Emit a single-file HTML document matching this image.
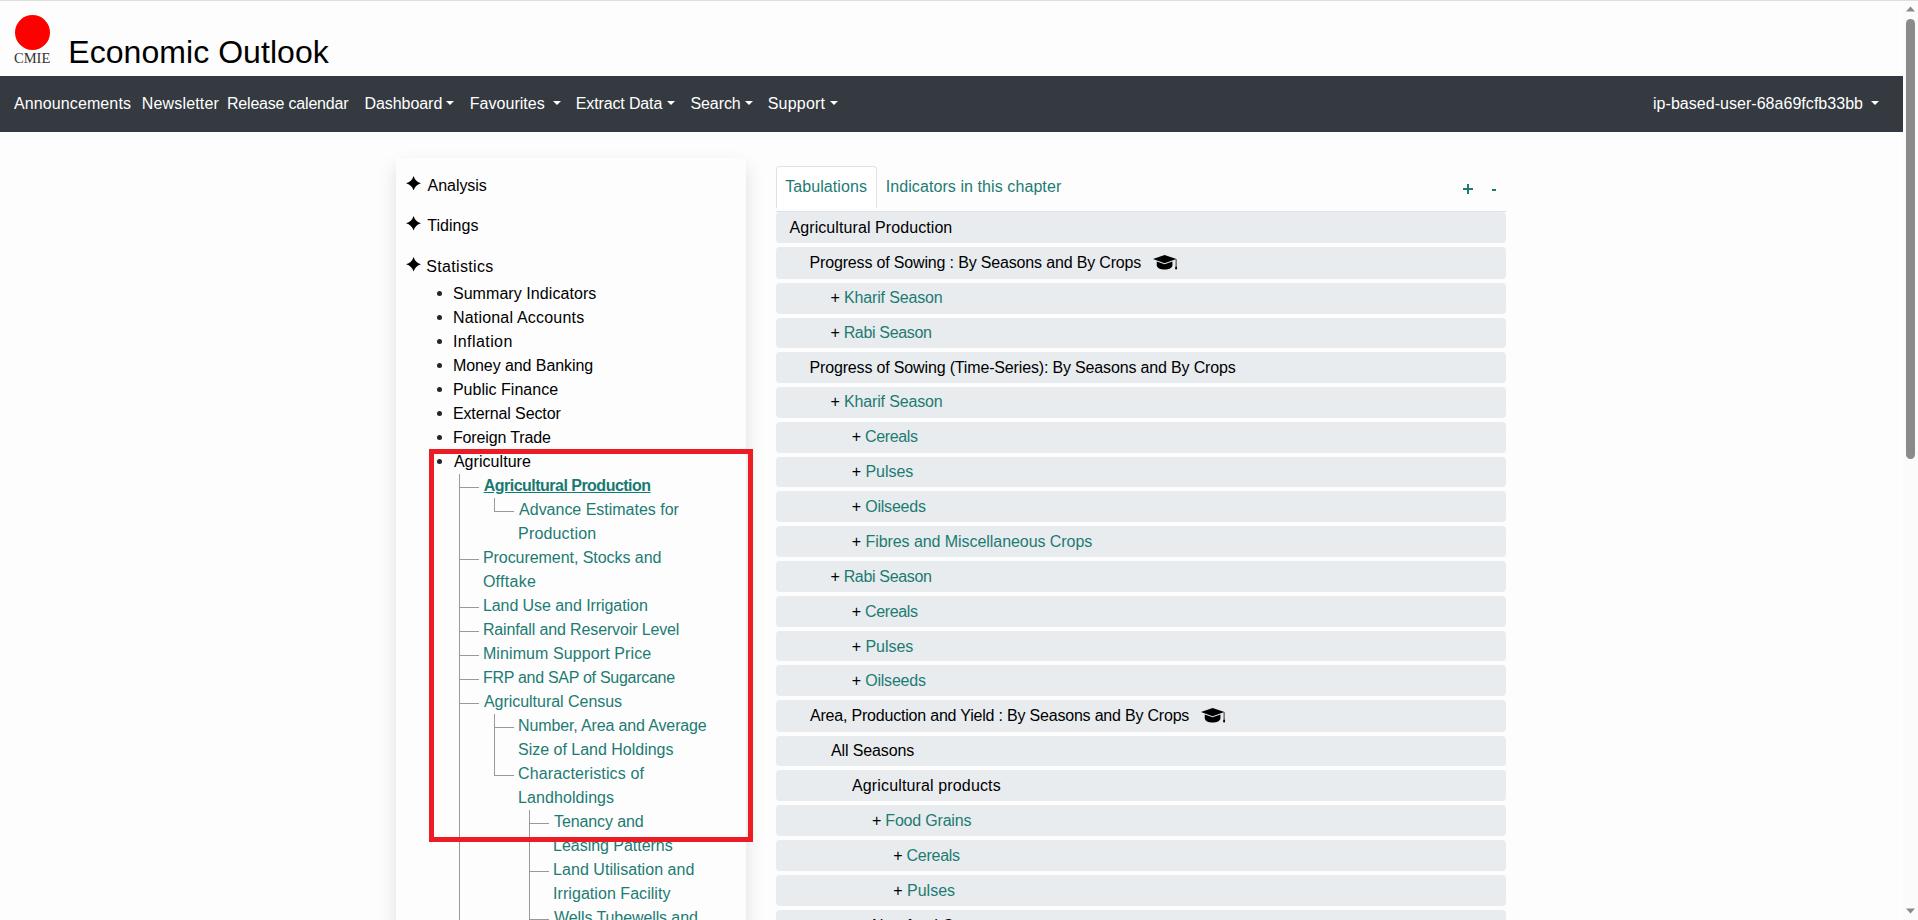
<!DOCTYPE html>
<html><head><meta charset="utf-8">
<style>
html,body{margin:0;padding:0;}
body{width:1918px;height:920px;overflow:hidden;background:#fdfdfd;position:relative;font-family:"Liberation Sans",sans-serif;font-size:16px;line-height:24px;color:#000;}
.a{position:absolute;white-space:nowrap;}
#topline{left:0;top:0;width:1918px;height:1px;background:#dfe0de;}
#logo{left:15px;top:15px;width:35px;height:35px;border-radius:50%;background:#ff0000;box-shadow:0 0 0 1px #fff;}
#cmie{left:14px;top:50px;font-family:"Liberation Serif",serif;font-size:14.5px;line-height:16px;color:#333;}
#title{font-size:32px;line-height:40px;color:#000;}
#nav{left:0;top:76px;width:1903px;height:56px;background:#343a40;}
.ni{color:#fff;}
.car{width:0;height:0;border-top:4.8px solid #fff;border-left:4.5px solid transparent;border-right:4.5px solid transparent;}
#panel{left:396px;top:158px;width:350px;height:800px;background:#fdfdfd;box-shadow:0 8px 18px rgba(0,0,0,.12);}
.bul{width:5px;height:5px;border-radius:50%;background:#212529;}
.tl{color:#1c7b72;}
.vl{width:1px;background:#999;}
.hl{height:1px;background:#999;}
#redbox{left:429px;top:449px;width:314px;height:383px;border:5px solid #ed1c24;}
#tab{left:776px;top:166px;width:99px;height:41px;border:1px solid #dee2e6;border-bottom:none;border-radius:4px 4px 0 0;background:#fff;}
#navline{left:776px;top:211px;width:730px;height:1px;background:#dee2e6;}
.row{left:776px;width:730px;background:#e9ecef;border-radius:4px;}
.lk{color:#1c7b72;}
.sb{background:#8a8a8a;}
</style></head><body>
<div class="a" id="topline"></div>
<div class="a" id="logo"></div>
<div class="a" id="cmie">CMIE</div>
<div id="title" class="a " style="left:68.30px;top:31.80px;letter-spacing:0.053px;">Economic Outlook</div>
<div class="a" id="nav"></div>
<div class="a ni" style="left:14.00px;top:92.00px;letter-spacing:0.108px;">Announcements</div>
<div class="a ni" style="left:141.80px;top:92.00px;letter-spacing:0.156px;">Newsletter</div>
<div class="a ni" style="left:227.00px;top:92.00px;letter-spacing:-0.200px;">Release calendar</div>
<div class="a ni" style="left:364.50px;top:92.00px;letter-spacing:-0.062px;">Dashboard</div>
<div class="a ni" style="left:469.80px;top:92.00px;letter-spacing:0.022px;">Favourites</div>
<div class="a ni" style="left:575.80px;top:92.00px;letter-spacing:-0.136px;">Extract Data</div>
<div class="a ni" style="left:690.50px;top:92.00px;letter-spacing:-0.100px;">Search</div>
<div class="a ni" style="left:767.70px;top:92.00px;letter-spacing:0.217px;">Support</div>
<div class="a ni" style="left:1653.00px;top:92.00px;letter-spacing:0.038px;">ip-based-user-68a69fcfb33bb</div>
<div class="a car" style="left:446.0px;top:100.5px"></div>
<div class="a car" style="left:553.0px;top:100.5px"></div>
<div class="a car" style="left:667.0px;top:100.5px"></div>
<div class="a car" style="left:744.5px;top:100.5px"></div>
<div class="a car" style="left:829.5px;top:100.5px"></div>
<div class="a car" style="left:1870.5px;top:100.5px"></div>
<div class="a" id="panel"></div>
<svg class="a" style="left:406.1px;top:175.9px" width="15.2" height="14.6" viewBox="0 0 15.2 14.6"><path d="M7.6 0Q9.3 5.6 15.2 7.3Q9.3 9.0 7.6 14.6Q5.9 9.0 0 7.3Q5.9 5.6 7.6 0Z" fill="#000"/></svg>
<div class="a " style="left:427.60px;top:174.20px;letter-spacing:-0.057px;">Analysis</div>
<svg class="a" style="left:406.1px;top:216.1px" width="15.2" height="14.6" viewBox="0 0 15.2 14.6"><path d="M7.6 0Q9.3 5.6 15.2 7.3Q9.3 9.0 7.6 14.6Q5.9 9.0 0 7.3Q5.9 5.6 7.6 0Z" fill="#000"/></svg>
<div class="a " style="left:427.30px;top:213.70px;letter-spacing:0.017px;">Tidings</div>
<svg class="a" style="left:406.1px;top:257.1px" width="15.2" height="14.6" viewBox="0 0 15.2 14.6"><path d="M7.6 0Q9.3 5.6 15.2 7.3Q9.3 9.0 7.6 14.6Q5.9 9.0 0 7.3Q5.9 5.6 7.6 0Z" fill="#000"/></svg>
<div class="a " style="left:426.30px;top:254.60px;letter-spacing:0.333px;">Statistics</div>
<div class="a bul" style="left:437px;top:291px"></div>
<div class="a " style="left:452.90px;top:282.00px;letter-spacing:0.071px;">Summary Indicators</div>
<div class="a bul" style="left:437px;top:315px"></div>
<div class="a " style="left:452.90px;top:306.00px;letter-spacing:0.200px;">National Accounts</div>
<div class="a bul" style="left:437px;top:339px"></div>
<div class="a " style="left:452.90px;top:330.00px;letter-spacing:0.425px;">Inflation</div>
<div class="a bul" style="left:437px;top:363px"></div>
<div class="a " style="left:452.90px;top:354.00px;letter-spacing:-0.069px;">Money and Banking</div>
<div class="a bul" style="left:437px;top:387px"></div>
<div class="a " style="left:452.90px;top:378.00px;letter-spacing:0.023px;">Public Finance</div>
<div class="a bul" style="left:437px;top:411px"></div>
<div class="a " style="left:452.90px;top:402.00px;letter-spacing:-0.107px;">External Sector</div>
<div class="a bul" style="left:437px;top:435px"></div>
<div class="a " style="left:452.90px;top:426.00px;letter-spacing:-0.125px;">Foreign Trade</div>
<div class="a bul" style="left:437px;top:459px"></div>
<div class="a " style="left:453.90px;top:450.00px;letter-spacing:0.050px;">Agriculture</div>
<div class="a tl" style="left:483.70px;top:474.00px;letter-spacing:-0.514px;font-weight:bold;text-decoration:underline;color:#177a72">Agricultural Production</div>
<div class="a hl" style="left:459px;top:487px;width:20px"></div>
<div class="a tl" style="left:519.10px;top:498.00px;letter-spacing:-0.015px;">Advance Estimates for</div>
<div class="a hl" style="left:494px;top:511px;width:20px"></div>
<div class="a tl" style="left:518.10px;top:522.00px;letter-spacing:0.167px;">Production</div>
<div class="a tl" style="left:482.90px;top:546.00px;letter-spacing:-0.050px;">Procurement, Stocks and</div>
<div class="a hl" style="left:459px;top:559px;width:20px"></div>
<div class="a tl" style="left:482.90px;top:570.00px;letter-spacing:0.283px;">Offtake</div>
<div class="a tl" style="left:482.90px;top:594.00px;letter-spacing:-0.064px;">Land Use and Irrigation</div>
<div class="a hl" style="left:459px;top:607px;width:20px"></div>
<div class="a tl" style="left:482.90px;top:618.00px;letter-spacing:-0.133px;">Rainfall and Reservoir Level</div>
<div class="a hl" style="left:459px;top:631px;width:20px"></div>
<div class="a tl" style="left:482.90px;top:642.00px;letter-spacing:0.100px;">Minimum Support Price</div>
<div class="a hl" style="left:459px;top:655px;width:20px"></div>
<div class="a tl" style="left:482.90px;top:666.00px;letter-spacing:-0.283px;">FRP and SAP of Sugarcane</div>
<div class="a hl" style="left:459px;top:679px;width:20px"></div>
<div class="a tl" style="left:483.90px;top:690.00px;letter-spacing:-0.028px;">Agricultural Census</div>
<div class="a hl" style="left:459px;top:703px;width:20px"></div>
<div class="a tl" style="left:518.10px;top:714.00px;letter-spacing:-0.139px;">Number, Area and Average</div>
<div class="a hl" style="left:494px;top:727px;width:20px"></div>
<div class="a tl" style="left:518.10px;top:738.00px;letter-spacing:-0.015px;">Size of Land Holdings</div>
<div class="a tl" style="left:518.10px;top:762.00px;letter-spacing:0.129px;">Characteristics of</div>
<div class="a hl" style="left:494px;top:775px;width:20px"></div>
<div class="a tl" style="left:518.10px;top:786.00px;letter-spacing:0.073px;">Landholdings</div>
<div class="a tl" style="left:554.10px;top:810.00px;letter-spacing:-0.120px;">Tenancy and</div>
<div class="a hl" style="left:529px;top:823px;width:20px"></div>
<div class="a tl" style="left:553.10px;top:834.00px;letter-spacing:-0.033px;">Leasing Patterns</div>
<div class="a tl" style="left:553.10px;top:858.00px;letter-spacing:0.037px;">Land Utilisation and</div>
<div class="a hl" style="left:529px;top:871px;width:20px"></div>
<div class="a tl" style="left:553.10px;top:882.00px;letter-spacing:0.050px;">Irrigation Facility</div>
<div class="a tl" style="left:554.10px;top:906.00px;letter-spacing:-0.100px;">Wells Tubewells and</div>
<div class="a hl" style="left:529px;top:919px;width:20px"></div>
<div class="a vl" style="left:459px;top:474px;height:460px"></div>
<div class="a vl" style="left:494px;top:498px;height:14px"></div>
<div class="a vl" style="left:494px;top:714px;height:62px"></div>
<div class="a vl" style="left:529px;top:810px;height:120px"></div>
<div class="a" id="redbox"></div>
<div class="a" id="tab"></div>
<div class="a lk" style="left:785.20px;top:174.80px;letter-spacing:0.080px;">Tabulations</div>
<div class="a lk" style="left:885.70px;top:174.80px;letter-spacing:0.084px;">Indicators in this chapter</div>
<div class="a" style="left:1463px;top:188.2px;width:10px;height:1.5px;background:#1c7b72"></div>
<div class="a" style="left:1467.25px;top:184px;width:1.5px;height:10px;background:#1c7b72"></div>
<div class="a" style="left:1491.6px;top:189px;width:4.6px;height:1.5px;background:#1c7b72"></div>
<div class="a" id="navline"></div>
<div class="a row" style="top:212.00px;height:31px"></div>
<div class="a " style="left:789.50px;top:216.10px;letter-spacing:0.082px;">Agricultural Production</div>
<div class="a row" style="top:247.00px;height:32px"></div>
<div class="a " style="left:809.50px;top:250.97px;letter-spacing:-0.163px;">Progress of Sowing : By Seasons and By Crops</div>
<svg class="a" style="left:1152.7px;top:255.30px" width="25" height="16" viewBox="0 0 25 16"><path fill="#000" d="M0 4.1L11.6 0L23.4 4.1L11.6 8.2Z"/><path fill="#000" d="M3.8 6.4L11.6 9.2L19.4 6.4L19.5 9.8C19.5 13.4 15.6 14.5 11.6 14.5C7.6 14.5 3.7 13.4 3.7 9.8Z"/><rect x="22.6" y="4.1" width="1" height="8" fill="#333"/><ellipse cx="23.1" cy="12.9" rx="1.05" ry="1.5" fill="#000"/></svg>
<div class="a row" style="top:283.00px;height:31px"></div>
<div class="a " style="left:830.50px;top:285.84px;letter-spacing:-0.150px;">+ <span class="lk">Kharif Season</span></div>
<div class="a row" style="top:318.00px;height:30px"></div>
<div class="a " style="left:830.50px;top:320.71px;letter-spacing:-0.333px;">+ <span class="lk">Rabi Season</span></div>
<div class="a row" style="top:352.00px;height:31px"></div>
<div class="a " style="left:809.50px;top:355.58px;letter-spacing:-0.159px;">Progress of Sowing (Time-Series): By Seasons and By Crops</div>
<div class="a row" style="top:387.00px;height:31px"></div>
<div class="a " style="left:830.50px;top:390.45px;letter-spacing:-0.150px;">+ <span class="lk">Kharif Season</span></div>
<div class="a row" style="top:422.00px;height:31px"></div>
<div class="a " style="left:851.80px;top:425.32px;letter-spacing:-0.337px;">+ <span class="lk">Cereals</span></div>
<div class="a row" style="top:457.00px;height:30px"></div>
<div class="a " style="left:851.80px;top:460.19px;letter-spacing:-0.057px;">+ <span class="lk">Pulses</span></div>
<div class="a row" style="top:491.00px;height:31px"></div>
<div class="a " style="left:851.80px;top:495.06px;letter-spacing:-0.211px;">+ <span class="lk">Oilseeds</span></div>
<div class="a row" style="top:526.00px;height:31px"></div>
<div class="a " style="left:851.80px;top:529.93px;letter-spacing:-0.061px;">+ <span class="lk">Fibres and Miscellaneous Crops</span></div>
<div class="a row" style="top:561.00px;height:31px"></div>
<div class="a " style="left:830.50px;top:564.80px;letter-spacing:-0.333px;">+ <span class="lk">Rabi Season</span></div>
<div class="a row" style="top:596.00px;height:31px"></div>
<div class="a " style="left:851.80px;top:599.67px;letter-spacing:-0.337px;">+ <span class="lk">Cereals</span></div>
<div class="a row" style="top:631.00px;height:30px"></div>
<div class="a " style="left:851.80px;top:634.54px;letter-spacing:-0.057px;">+ <span class="lk">Pulses</span></div>
<div class="a row" style="top:665.00px;height:31px"></div>
<div class="a " style="left:851.80px;top:669.41px;letter-spacing:-0.211px;">+ <span class="lk">Oilseeds</span></div>
<div class="a row" style="top:700.00px;height:32px"></div>
<div class="a " style="left:810.00px;top:704.28px;letter-spacing:-0.200px;">Area, Production and Yield : By Seasons and By Crops</div>
<svg class="a" style="left:1201.0px;top:708.30px" width="25" height="16" viewBox="0 0 25 16"><path fill="#000" d="M0 4.1L11.6 0L23.4 4.1L11.6 8.2Z"/><path fill="#000" d="M3.8 6.4L11.6 9.2L19.4 6.4L19.5 9.8C19.5 13.4 15.6 14.5 11.6 14.5C7.6 14.5 3.7 13.4 3.7 9.8Z"/><rect x="22.6" y="4.1" width="1" height="8" fill="#333"/><ellipse cx="23.1" cy="12.9" rx="1.05" ry="1.5" fill="#000"/></svg>
<div class="a row" style="top:736.00px;height:30px"></div>
<div class="a " style="left:830.90px;top:739.15px;letter-spacing:-0.110px;">All Seasons</div>
<div class="a row" style="top:770.00px;height:31px"></div>
<div class="a " style="left:852.00px;top:774.02px;letter-spacing:0.140px;">Agricultural products</div>
<div class="a row" style="top:805.00px;height:31px"></div>
<div class="a " style="left:871.90px;top:808.89px;letter-spacing:-0.192px;">+ <span class="lk">Food Grains</span></div>
<div class="a row" style="top:840.00px;height:31px"></div>
<div class="a " style="left:893.30px;top:843.76px;letter-spacing:-0.262px;">+ <span class="lk">Cereals</span></div>
<div class="a row" style="top:875.00px;height:31px"></div>
<div class="a " style="left:893.30px;top:878.63px;letter-spacing:-0.014px;">+ <span class="lk">Pulses</span></div>
<div class="a row" style="top:910.00px;height:31px"></div>
<div class="a " style="left:872.00px;top:913.50px;letter-spacing:0.000px;">Non-food Crops</div>
<div class="a" style="left:1903px;top:1px;width:15px;height:919px;background:#fbfbfb"></div>
<div class="a sb" style="left:1906px;top:18.5px;width:9px;height:440px;border-radius:4.5px"></div>
<svg class="a" style="left:1906px;top:6px" width="9" height="6"><path d="M0 5.5L4.5 0.5L9 5.5Z" fill="#8a8a8a"/></svg>
<svg class="a" style="left:1906px;top:908px" width="9" height="6"><path d="M0 0.5L4.5 5.5L9 0.5Z" fill="#8a8a8a"/></svg>
</body></html>
